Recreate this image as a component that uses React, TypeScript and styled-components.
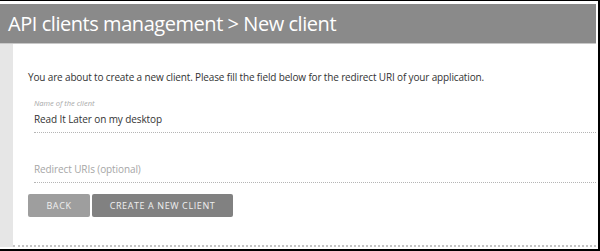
import React from 'react';
import styled, { createGlobalStyle } from 'styled-components';

const GlobalStyle = createGlobalStyle`
  html, body {
    margin: 0;
    padding: 0;
    background: #ffffff;
  }
  * {
    box-sizing: border-box;
  }
`;

const Frame = styled.div`
  width: 600px;
  height: 251px;
  background: #ffffff;
  border-top: 1px solid #000;
  border-right: 2px solid #000;
  border-bottom: 2px solid #000;
  padding: 3px 2px 0 0;
  display: flex;
  flex-direction: column;
  font-family: 'Open Sans', 'DejaVu Sans', sans-serif;
  overflow: hidden;
`;

const Header = styled.div`
  height: 40px;
  background: #8a8a8a;
  border-bottom: 1px solid #c8c8c8;
  display: flex;
  align-items: center;
  padding-left: 8px;
`;

const Title = styled.h1`
  margin: 0;
  font-size: 20px;
  font-weight: 400;
  color: #ffffff;
  letter-spacing: -0.45px;
`;

const Body = styled.div`
  flex: 1;
  display: flex;
`;

const SideStrip = styled.div`
  width: 13px;
  background: #e6e6e6;
  margin-bottom: 2px;
`;

const Content = styled.div`
  flex: 1;
  padding: 26px 0 0 15px;
  border-bottom: 2px dotted #c4c4c4;
  margin-bottom: 2px;
`;

const Intro = styled.p`
  margin: 0 0 14px;
  font-size: 10px;
  letter-spacing: -0.15px;
  color: #333333;
`;

const Field = styled.div<{ gap: number }>`
  margin-left: 6px;
  margin-bottom: ${p => p.gap}px;
  border-bottom: 1px dotted #b5b5b5;
`;

const Label = styled.div`
  font-size: 7.5px;
  font-style: italic;
  color: #a8a8a8;
  height: 12px;
`;

const Value = styled.div<{ placeholder?: boolean }>`
  font-size: 10px;
  letter-spacing: -0.1px;
  line-height: 14px;
  color: ${p => (p.placeholder ? '#a6a6a6' : '#333333')};
  padding: 2px 0 6px;
`;

const Buttons = styled.div`
  display: flex;
  gap: 2px;
`;

const Button = styled.button<{ primary?: boolean }>`
  height: 23px;
  padding: 0;
  width: ${p => (p.primary ? '141px' : '62px')};
  border: none;
  border-radius: 2px;
  background: ${p => (p.primary ? '#818181' : '#9e9e9e')};
  color: #f0f0f0;
  font-family: inherit;
  font-size: 9px;
  letter-spacing: 0.6px;
  text-transform: uppercase;
`;

export default function App() {
  return (
    <>
      <GlobalStyle />
      <Frame>
        <Header>
          <Title>API clients management &gt; New client</Title>
        </Header>
        <Body>
          <SideStrip />
          <Content>
            <Intro>
              You are about to create a new client. Please fill the field below for the redirect URI of your application.
            </Intro>
            <Field gap={27}>
              <Label>Name of the client</Label>
              <Value>Read It Later on my desktop</Value>
            </Field>
            <Field gap={11}>
              <Value placeholder>Redirect URIs (optional)</Value>
            </Field>
            <Buttons>
              <Button>Back</Button>
              <Button primary>Create a new client</Button>
            </Buttons>
          </Content>
        </Body>
      </Frame>
    </>
  );
}
